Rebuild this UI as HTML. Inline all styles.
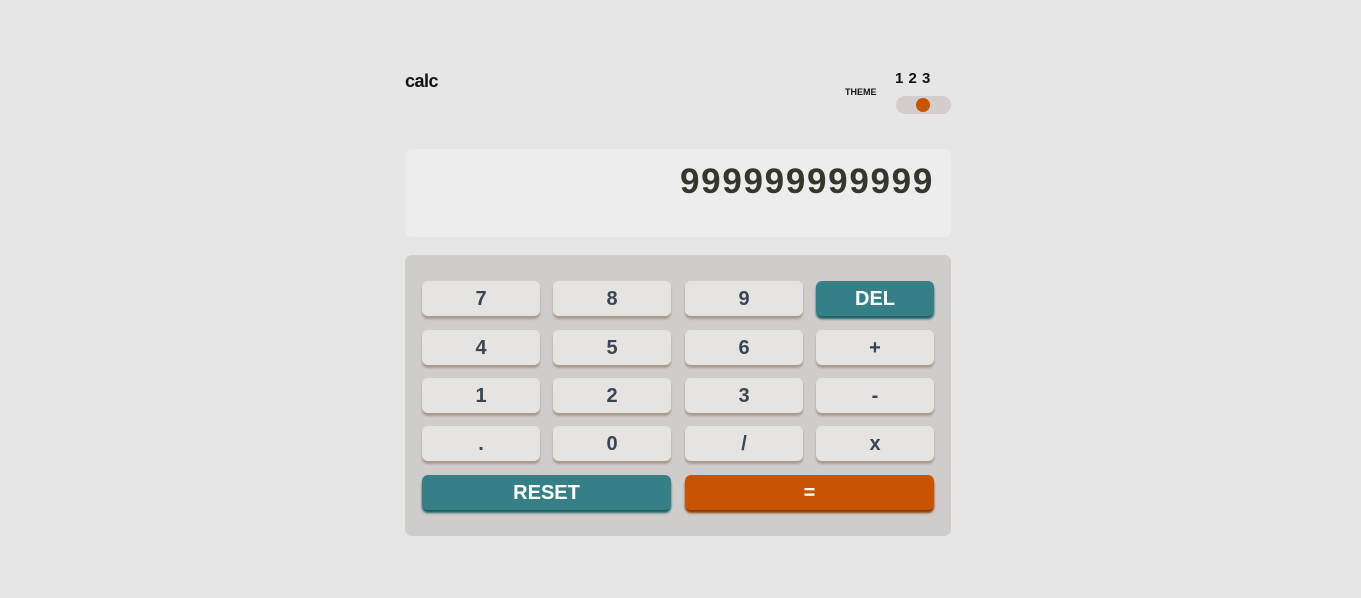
<!DOCTYPE html>
<html><head><style>
body{margin:0;background:#e6e6e6;width:1361px;height:598px;position:relative;font-family:"Liberation Sans",sans-serif;overflow:hidden}
.abs{position:absolute}
.k{position:absolute;width:118px;height:35px;background:#e6e4e0;border-radius:6px;box-shadow:0 3px 2px #a69a8c;color:#3a4457;font-weight:bold;font-size:20px;text-align:center;line-height:36px}
.t{background:#377f86;color:#fff;box-shadow:0 3px 2px #1b5f65}
.o{background:#c85401;color:#fff;box-shadow:0 3px 2px #873901}
</style></head><body>
<div class="abs" style="left:405px;top:71px;font-size:18px;font-weight:900;letter-spacing:-0.5px;color:#111">calc</div>
<div class="abs" style="left:845px;top:87px;font-size:9px;font-weight:900;color:#111">THEME</div>
<div class="abs" style="left:895px;top:70px;font-size:15px;font-weight:900;color:#111;word-spacing:1px">1 2 3</div>
<div class="abs" style="left:896px;top:96px;width:55px;height:18px;border-radius:9px;background:#d3cdcd"></div>
<div class="abs" style="left:916px;top:98px;width:14px;height:14px;border-radius:50%;background:#c85401"></div>
<div class="abs" style="left:405px;top:149px;width:546px;height:88px;border-radius:7px;background:#ededed"></div>
<div class="abs" style="right:427px;top:162px;font-size:35px;font-weight:bold;color:#36362c;letter-spacing:1.7px">999999999999</div>
<div class="abs" style="left:405px;top:255px;width:546px;height:281px;border-radius:7px;background:#d1cccc"></div>
<div class="k" style="left:422px;top:281px">7</div>
<div class="k" style="left:553px;top:281px">8</div>
<div class="k" style="left:685px;top:281px">9</div>
<div class="k t" style="left:816px;top:281px">DEL</div>
<div class="k" style="left:422px;top:330px">4</div>
<div class="k" style="left:553px;top:330px">5</div>
<div class="k" style="left:685px;top:330px">6</div>
<div class="k" style="left:816px;top:330px">+</div>
<div class="k" style="left:422px;top:378px">1</div>
<div class="k" style="left:553px;top:378px">2</div>
<div class="k" style="left:685px;top:378px">3</div>
<div class="k" style="left:816px;top:378px">-</div>
<div class="k" style="left:422px;top:426px">.</div>
<div class="k" style="left:553px;top:426px">0</div>
<div class="k" style="left:685px;top:426px">/</div>
<div class="k" style="left:816px;top:426px">x</div>
<div class="k t" style="left:422px;top:475px;width:249px">RESET</div>
<div class="k o" style="left:685px;top:475px;width:249px">=</div>
</body></html>
